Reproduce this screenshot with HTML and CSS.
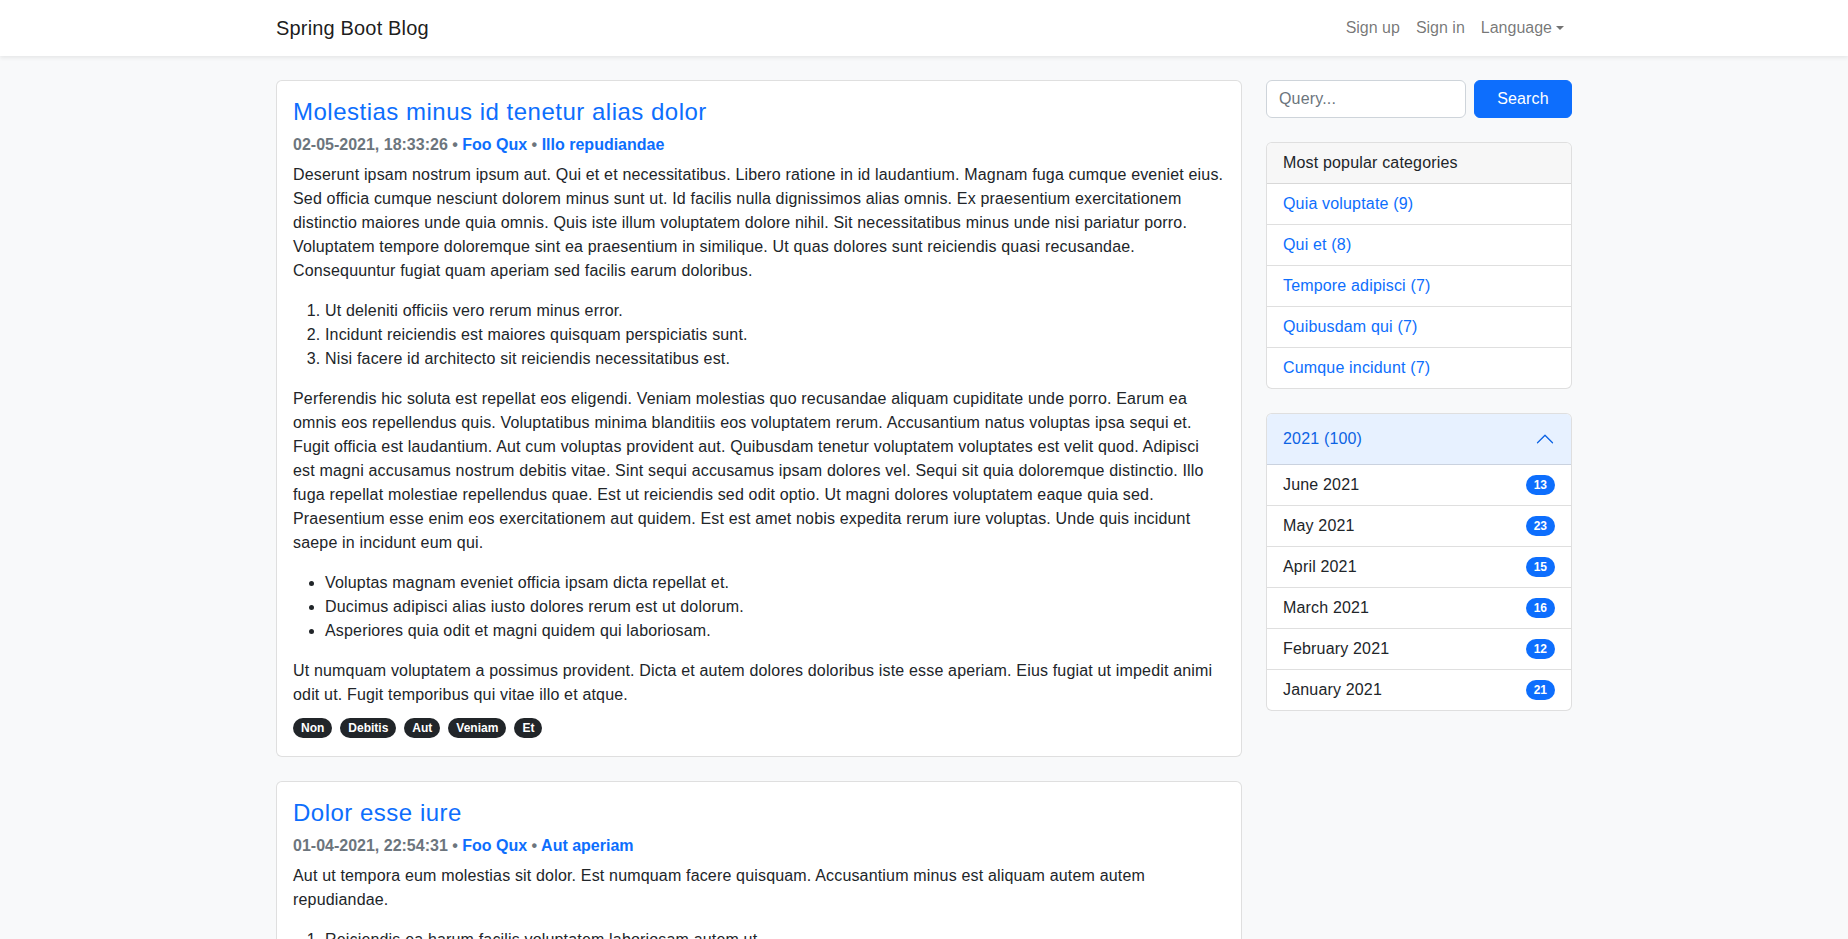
FILE: index.html
```html
<!DOCTYPE html>
<html lang="en">
<head>
<meta charset="utf-8">
<title>Spring Boot Blog</title>
<link rel="stylesheet" href="styles.css">
</head>
<body>
<nav class="navbar">
  <div class="container nav-inner">
    <a class="brand" href="#">Spring Boot Blog</a>
    <ul class="nav-links">
      <li><a href="#">Sign up</a></li>
      <li><a href="#">Sign in</a></li>
      <li><a href="#" class="dropdown">Language</a></li>
    </ul>
  </div>
</nav>

<div class="container layout">
  <main class="posts">
    <article class="card post">
      <h4 class="post-title"><a href="#">Molestias minus id tenetur alias dolor</a></h4>
      <h6 class="post-meta">02-05-2021, 18:33:26 &bull; <a href="#">Foo Qux</a> &bull; <a href="#">Illo repudiandae</a></h6>
      <div class="post-body">
        <p>Deserunt ipsam nostrum ipsum aut. Qui et et necessitatibus. Libero ratione in id laudantium. Magnam fuga cumque eveniet eius. Sed officia cumque nesciunt dolorem minus sunt ut. Id facilis nulla dignissimos alias omnis. Ex praesentium exercitationem distinctio maiores unde quia omnis. Quis iste illum voluptatem dolore nihil. Sit necessitatibus minus unde nisi pariatur porro. Voluptatem tempore doloremque sint ea praesentium in similique. Ut quas dolores sunt reiciendis quasi recusandae. Consequuntur fugiat quam aperiam sed facilis earum doloribus.</p>
        <ol>
          <li>Ut deleniti officiis vero rerum minus error.</li>
          <li>Incidunt reiciendis est maiores quisquam perspiciatis sunt.</li>
          <li>Nisi facere id architecto sit reiciendis necessitatibus est.</li>
        </ol>
        <p>Perferendis hic soluta est repellat eos eligendi. Veniam molestias quo recusandae aliquam cupiditate unde porro. Earum ea omnis eos repellendus quis. Voluptatibus minima blanditiis eos voluptatem rerum. Accusantium natus voluptas ipsa sequi et. Fugit officia est laudantium. Aut cum voluptas provident aut. Quibusdam tenetur voluptatem voluptates est velit quod. Adipisci est magni accusamus nostrum debitis vitae. Sint sequi accusamus ipsam dolores vel. Sequi sit quia doloremque distinctio. Illo fuga repellat molestiae repellendus quae. Est ut reiciendis sed odit optio. Ut magni dolores voluptatem eaque quia sed. Praesentium esse enim eos exercitationem aut quidem. Est est amet nobis expedita rerum iure voluptas. Unde quis incidunt saepe in incidunt eum qui.</p>
        <ul>
          <li>Voluptas magnam eveniet officia ipsam dicta repellat et.</li>
          <li>Ducimus adipisci alias iusto dolores rerum est ut dolorum.</li>
          <li>Asperiores quia odit et magni quidem qui laboriosam.</li>
        </ul>
        <p>Ut numquam voluptatem a possimus provident. Dicta et autem dolores doloribus iste esse aperiam. Eius fugiat ut impedit animi odit ut. Fugit temporibus qui vitae illo et atque.</p>
      </div>
      <div class="tags">
        <a href="#" class="tag">Non</a>
        <a href="#" class="tag">Debitis</a>
        <a href="#" class="tag">Aut</a>
        <a href="#" class="tag">Veniam</a>
        <a href="#" class="tag">Et</a>
      </div>
    </article>

    <article class="card post">
      <h4 class="post-title"><a href="#">Dolor esse iure</a></h4>
      <h6 class="post-meta">01-04-2021, 22:54:31 &bull; <a href="#">Foo Qux</a> &bull; <a href="#">Aut aperiam</a></h6>
      <div class="post-body">
        <p>Aut ut tempora eum molestias sit dolor. Est numquam facere quisquam. Accusantium minus est aliquam autem autem repudiandae.</p>
        <ol>
          <li>Reiciendis ea harum facilis voluptatem laboriosam autem ut.</li>
          <li>Quia sed dolores eum ullam et quas.</li>
          <li>Sint rerum sit possimus voluptas.</li>
        </ol>
        <p>Voluptatem ipsum aut aut. Laborum quia repellendus fuga nesciunt dolorum ut.</p>
      </div>
    </article>
  </main>

  <aside class="sidebar">
    <form class="search">
      <input type="text" class="search-input" placeholder="Query...">
      <button type="button" class="search-btn">Search</button>
    </form>

    <div class="card categories">
      <div class="card-header">Most popular categories</div>
      <ul class="list">
        <li><a href="#">Quia voluptate (9)</a></li>
        <li><a href="#">Qui et (8)</a></li>
        <li><a href="#">Tempore adipisci (7)</a></li>
        <li><a href="#">Quibusdam qui (7)</a></li>
        <li><a href="#">Cumque incidunt (7)</a></li>
      </ul>
    </div>

    <div class="card archive">
      <button type="button" class="archive-header">
        <span>2021 (100)</span>
        <svg class="chevron" viewBox="0 0 16 16" width="20" height="20" aria-hidden="true"><path fill="currentColor" fill-rule="evenodd" d="M1.646 11.354a.5.5 0 0 0 .708 0L8 5.707l5.646 5.647a.5.5 0 0 0 .708-.708l-6-6a.5.5 0 0 0-.708 0l-6 6a.5.5 0 0 0 0 .708z"/></svg>
      </button>
      <ul class="list months">
        <li><span>June 2021</span><span class="count">13</span></li>
        <li><span>May 2021</span><span class="count">23</span></li>
        <li><span>April 2021</span><span class="count">15</span></li>
        <li><span>March 2021</span><span class="count">16</span></li>
        <li><span>February 2021</span><span class="count">12</span></li>
        <li><span>January 2021</span><span class="count">21</span></li>
      </ul>
    </div>
  </aside>
</div>
</body>
</html>
```

FILE: styles.css
```css
* { box-sizing: border-box; }

html, body {
  margin: 0;
  padding: 0;
}

body {
  font-family: "Liberation Sans", Arial, sans-serif;
  font-size: 16px;
  line-height: 1.5;
  letter-spacing: 0.17px;
  color: #212529;
  background: #f8f9fa;
}

a {
  color: #0d6efd;
  text-decoration: none;
}

.container {
  width: 1320px;
  margin: 0 auto;
  padding: 0 12px;
}

/* navbar */
.navbar {
  background: #fff;
  box-shadow: 0 2px 4px rgba(0, 0, 0, 0.075);
  height: 56px;
}

.nav-inner {
  display: flex;
  align-items: center;
  justify-content: space-between;
  height: 56px;
}

.brand {
  font-size: 20px;
  color: rgba(0, 0, 0, 0.9);
  line-height: 30px;
}

.nav-links {
  display: flex;
  list-style: none;
  margin: 0;
  padding: 0;
  letter-spacing: 0;
}

.nav-links a {
  display: block;
  padding: 8px;
  color: rgba(0, 0, 0, 0.55);
}

.dropdown::after {
  content: "";
  display: inline-block;
  margin-left: 4px;
  vertical-align: 3px;
  border-top: 4.5px solid;
  border-left: 4px solid transparent;
  border-right: 4px solid transparent;
}

/* layout */
.layout {
  display: grid;
  grid-template-columns: minmax(0, 1fr) 306px;
  column-gap: 24px;
  align-items: start;
  margin-top: 24px;
}

.card {
  background: #fff;
  border: 1px solid rgba(0, 0, 0, 0.125);
  border-radius: 6px;
}

/* posts */
.post {
  padding: 17px 16px 18px;
  margin-bottom: 24px;
}

.post-title {
  margin: 0 0 8px;
  font-size: 24px;
  font-weight: 500;
  line-height: 1.2;
  letter-spacing: 0.5px;
}

.post-meta {
  margin: 0 0 9px;
  font-size: 16px;
  font-weight: 700;
  line-height: 1.2;
  letter-spacing: 0;
  color: #6c757d;
}

.post-body p {
  margin: 0 0 16px;
}

.post-body p:last-child {
  margin-bottom: 0;
}

.post-body ol,
.post-body ul {
  margin: 0 0 16px;
  padding-left: 32px;
}

.tags {
  display: flex;
  gap: 8px;
  margin-top: 11px;
}

.tag {
  display: inline-block;
  background: #212529;
  color: #fff;
  font-size: 12px;
  font-weight: 700;
  line-height: 1;
  letter-spacing: 0;
  padding: 4px 8px;
  border-radius: 10px;
}

/* sidebar */
.search {
  display: grid;
  grid-template-columns: minmax(0, 1fr) 98px;
  column-gap: 8px;
  margin: 0 0 24px;
}

.search-input {
  width: 100%;
  min-width: 0;
  height: 38px;
  padding: 6px 12px;
  font: inherit;
  letter-spacing: inherit;
  color: #212529;
  background: #fff;
  border: 1px solid #ced4da;
  border-radius: 6px;
}

.search-input::placeholder {
  color: #6c757d;
}

.search-btn {
  width: 100%;
  height: 38px;
  font: inherit;
  letter-spacing: inherit;
  color: #fff;
  background: #0d6efd;
  border: 1px solid #0d6efd;
  border-radius: 6px;
}

.categories {
  margin-bottom: 24px;
  overflow: hidden;
}

.card-header {
  padding: 8px 16px;
  background: #f7f7f7;
  border-bottom: 1px solid rgba(0, 0, 0, 0.125);
}

.list {
  list-style: none;
  margin: 0;
  padding: 0;
}

.list li {
  padding: 8px 16px;
  border-bottom: 1px solid rgba(0, 0, 0, 0.125);
}

.list li:last-child {
  border-bottom: 0;
}

.list a {
  display: block;
}

.archive {
  overflow: hidden;
}

.archive-header {
  display: flex;
  align-items: center;
  justify-content: space-between;
  width: 100%;
  padding: 13px 16px;
  font: inherit;
  letter-spacing: inherit;
  line-height: 24px;
  color: #0c63e4;
  background: #e7f1ff;
  border: 0;
  border-bottom: 1px solid rgba(0, 0, 0, 0.125);
  text-align: left;
}

.chevron {
  display: block;
}

.months li {
  display: flex;
  justify-content: space-between;
  align-items: center;
}

.count {
  display: inline-block;
  background: #0d6efd;
  color: #fff;
  font-size: 12px;
  font-weight: 700;
  line-height: 1;
  letter-spacing: 0;
  padding: 4px 8px;
  border-radius: 10px;
}
```
